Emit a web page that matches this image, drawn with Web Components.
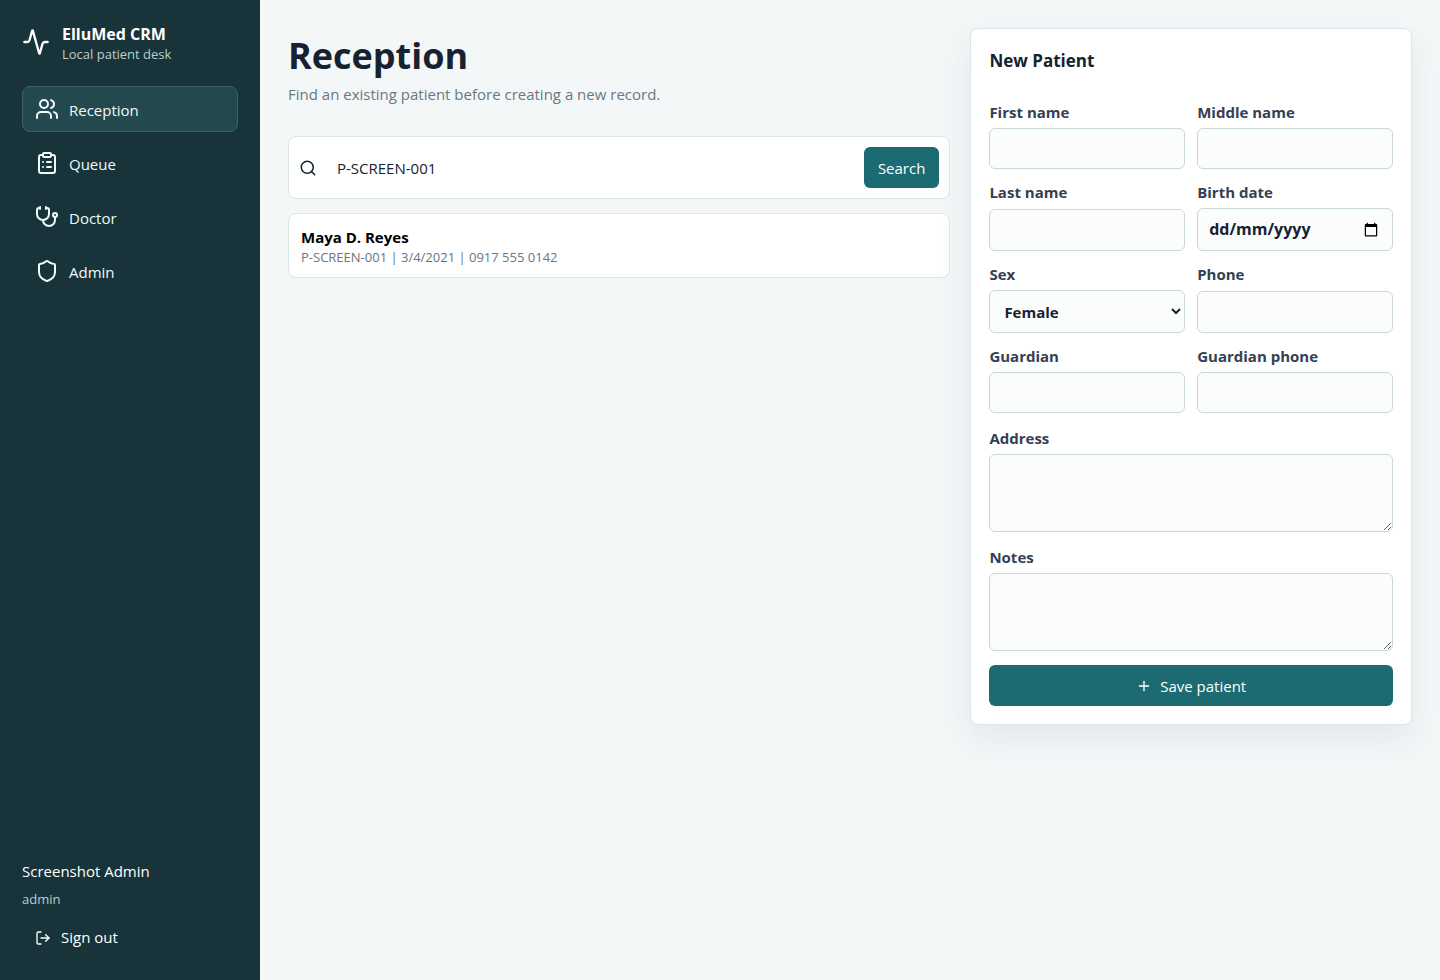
<!DOCTYPE html>
<html lang="en-GB">
<head>
<meta charset="utf-8">
<meta name="viewport" content="width=device-width, initial-scale=1">
<title>ElluMed CRM</title>
<style>
  body {
    margin: 0;
    background: #f3f7f8;
    color: #172231;
    font: 15px/21px "Segoe UI", "Open Sans", "Noto Sans", sans-serif;
  }
</style>
</head>
<body>
<crm-app></crm-app>
<script>
const define = (name, html, setup) => {
  const template = document.createElement('template');
  template.innerHTML = `<style>*{box-sizing:border-box}:host{box-sizing:border-box}</style>` + html;
  customElements.define(name, class extends HTMLElement {
    constructor() {
      super();
      this.attachShadow({ mode: 'open' }).append(template.content.cloneNode(true));
    }
    connectedCallback() {
      if (setup && !this.ready) { this.ready = true; setup(this, this.shadowRoot); }
    }
  });
};

const ICONS = {
  activity: '<path d="M22 12h-2.48a2 2 0 0 0-1.93 1.46l-2.35 8.36a.25.25 0 0 1-.48 0L9.24 2.18a.25.25 0 0 0-.48 0l-2.35 8.36A2 2 0 0 1 4.49 12H2"/>',
  users: '<path d="M16 21v-2a4 4 0 0 0-4-4H6a4 4 0 0 0-4 4v2"/><circle cx="9" cy="7" r="4"/><path d="M22 21v-2a4 4 0 0 0-3-3.87"/><path d="M16 3.13a4 4 0 0 1 0 7.75"/>',
  clipboard: '<rect width="8" height="4" x="8" y="2" rx="1" ry="1"/><path d="M16 4h2a2 2 0 0 1 2 2v14a2 2 0 0 1-2 2H6a2 2 0 0 1-2-2V6a2 2 0 0 1 2-2h2"/><path d="M12 11h4"/><path d="M12 16h4"/><path d="M8 11h.01"/><path d="M8 16h.01"/>',
  stethoscope: '<path d="M11 2v2"/><path d="M5 2v2"/><path d="M5 3H4a2 2 0 0 0-2 2v4a6 6 0 0 0 12 0V5a2 2 0 0 0-2-2h-1"/><path d="M8 15a6 6 0 0 0 12 0v-3"/><circle cx="20" cy="10" r="2"/>',
  shield: '<path d="M20 13c0 5-3.5 7.5-7.66 8.95a1 1 0 0 1-.67-.01C7.5 20.5 4 18 4 13V6a1 1 0 0 1 1-1c2 0 4.5-1.2 6.24-2.72a1.17 1.17 0 0 1 1.52 0C14.51 3.81 17 5 19 5a1 1 0 0 1 1 1z"/>',
  logout: '<path d="m16 17 5-5-5-5"/><path d="M21 12H9"/><path d="M9 21H5a2 2 0 0 1-2-2V5a2 2 0 0 1 2-2h4"/>',
  search: '<path d="m21 21-4.34-4.34"/><circle cx="11" cy="11" r="8"/>',
  plus: '<path d="M5 12h14"/><path d="M12 5v14"/>'
};

define('crm-icon', `
  <style>
    :host { display: block; flex: none; width: var(--icon-size, 18px); height: var(--icon-size, 18px); }
    svg { display: block; width: 100%; height: 100%; fill: none; stroke: currentColor;
      stroke-width: 2; stroke-linecap: round; stroke-linejoin: round; }
  </style>
  <svg viewBox="0 0 24 24" aria-hidden="true"></svg>`,
  (el, root) => { root.querySelector('svg').innerHTML = ICONS[el.getAttribute('name')]; });

define('crm-button', `
  <style>
    :host { display: block; --icon-size: 16px; }
    button { display: flex; align-items: center; justify-content: center; gap: 8px; width: 100%;
      height: 41px; padding: 1px 14px 0; border: 0; border-radius: 6px; background: #1d6b72;
      color: #fff; font: inherit; cursor: pointer; }
    :host([quiet]) button { background: transparent; gap: 10px; padding: 0 13px; }
  </style>
  <button type="button"><slot name="icon"></slot><span><slot></slot></span></button>`);

define('crm-nav-item', `
  <style>
    :host { display: block; --icon-size: 24px; }
    a { display: flex; align-items: center; gap: 10px; height: 46px; padding: 0 12px;
      border: 1px solid transparent; border-radius: 8px; color: #f2f9f9; text-decoration: none; }
    span { padding-top: 2px; }
    :host([current]) a { background: #23494f; border-color: #386369; }
  </style>
  <a href="#"><slot name="icon"></slot><span><slot></slot></span></a>`,
  (el, root) => { if (el.hasAttribute('current')) root.querySelector('a').setAttribute('aria-current', 'page'); });

define('crm-sidebar', `
  <style>
    :host { display: flex; flex-direction: column; padding: 22px; background: #18343a; color: #fff; }
    .brand { display: flex; align-items: center; gap: 12px; height: 40px; margin-bottom: 24px; --icon-size: 28px; }
    .brand div { padding-top: 4px; }
    .brand strong, .brand span { display: block; line-height: 20px; }
    .brand strong { font-size: 16px; }
    .brand span { font-size: 13px; color: #b9ced0; }
    nav { display: grid; gap: 8px; }
    .account { margin-top: auto; display: grid; justify-items: start; gap: 7px; }
    .account small { font-size: 13px; color: #b9ced0; }
  </style>
  <div class="brand">
    <crm-icon name="activity"></crm-icon>
    <div><strong>ElluMed CRM</strong><span>Local patient desk</span></div>
  </div>
  <nav aria-label="Main">
    <crm-nav-item current><crm-icon slot="icon" name="users"></crm-icon>Reception</crm-nav-item>
    <crm-nav-item><crm-icon slot="icon" name="clipboard"></crm-icon>Queue</crm-nav-item>
    <crm-nav-item><crm-icon slot="icon" name="stethoscope"></crm-icon>Doctor</crm-nav-item>
    <crm-nav-item><crm-icon slot="icon" name="shield"></crm-icon>Admin</crm-nav-item>
  </nav>
  <div class="account">
    <span>Screenshot Admin</span>
    <small>admin</small>
    <crm-button quiet><crm-icon slot="icon" name="logout"></crm-icon>Sign out</crm-button>
  </div>`);

define('crm-search', `
  <style>
    :host { display: block; }
    form { display: flex; align-items: center; gap: 10px; padding: 10px; background: #fff;
      border: 1px solid #dbe6e8; border-radius: 8px; }
    input { flex: 1; min-width: 0; height: 41px; padding: 0 10px; border: 0; outline: 0;
      background: transparent; color: inherit; font: inherit; }
  </style>
  <form role="search">
    <crm-icon name="search"></crm-icon>
    <input type="text" aria-label="Search patients" value="P-SCREEN-001">
    <crm-button>Search</crm-button>
  </form>`);

define('crm-patient', `
  <style>
    :host { display: block; }
    button { display: block; width: 100%; padding: 13px 12px 10px; background: #fff; text-align: left;
      border: 1px solid #dbe6e8; border-radius: 8px; color: #000; font: inherit; cursor: pointer; }
    strong, span { display: block; line-height: 20px; }
    span { font-size: 13px; color: #687782; }
  </style>
  <button type="button"><strong><slot name="name"></slot></strong><span><slot></slot></span></button>`);

define('crm-field', `
  <style>
    :host { display: grid; }
    label { display: grid; grid-template-rows: auto auto; row-gap: 5px; color: #344054; font-weight: 700; }
    .caption { padding-top: 1px; }
    input, select, textarea { width: 100%; min-height: 41px; margin: 0; padding: 0 11px; grid-area: 2 / 1;
      border: 1px solid #c9d8db; border-radius: 6px; background: #fbfdfd; color: #172231; font: inherit; }
    input[type=date], select { min-height: 43px; }
    input[type=date] { font-size: 16px; }
    select { padding: 0 10px; }
    textarea { display: block; height: 78px; padding: 10px 11px; resize: vertical; }
    .hint { grid-area: 2 / 1; align-self: center; padding: 0 12px; color: #172231; font-size: 16px;
      z-index: 1; pointer-events: none; }
    input.empty:not(:focus)::-webkit-datetime-edit { visibility: hidden; }
    input:focus ~ .hint, input:not(.empty) ~ .hint { visibility: hidden; }
  </style>
  <label><span class="caption"></span></label>`,
  (el, root) => {
    const kind = el.getAttribute('kind') || 'text';
    const label = root.querySelector('label');
    label.firstElementChild.textContent = el.getAttribute('label');
    const control = document.createElement(kind === 'select' || kind === 'textarea' ? kind : 'input');
    if (control.localName === 'input') control.type = kind;
    control.id = 'control';
    label.htmlFor = 'control';
    for (const text of (el.getAttribute('options') || '').split(',').filter(Boolean)) control.append(new Option(text));
    label.append(control);
    if (el.hasAttribute('hint')) {
      const hint = document.createElement('span');
      hint.className = 'hint';
      hint.textContent = el.getAttribute('hint');
      label.append(hint);
      const update = () => control.classList.toggle('empty', !control.value);
      control.addEventListener('input', update);
      update();
    }
  });

define('crm-patient-form', `
  <style>
    :host { display: block; }
    form { display: grid; gap: 14px; padding: 18px; background: #fff; border: 1px solid #dbe6e8;
      border-radius: 8px; box-shadow: 0 14px 34px rgba(24, 45, 58, .08); }
    h2 { margin: 0 0 12px; font-size: 17px; line-height: 28px; }
    .pairs { display: grid; grid-template-columns: 1fr 1fr; gap: 12px; }
  </style>
  <form>
    <h2>New Patient</h2>
    <div class="pairs">
      <crm-field label="First name"></crm-field>
      <crm-field label="Middle name"></crm-field>
      <crm-field label="Last name"></crm-field>
      <crm-field label="Birth date" kind="date" hint="dd/mm/yyyy"></crm-field>
      <crm-field label="Sex" kind="select" options="Female,Male"></crm-field>
      <crm-field label="Phone"></crm-field>
      <crm-field label="Guardian"></crm-field>
      <crm-field label="Guardian phone"></crm-field>
    </div>
    <crm-field label="Address" kind="textarea"></crm-field>
    <crm-field label="Notes" kind="textarea"></crm-field>
    <crm-button><crm-icon slot="icon" name="plus"></crm-icon>Save patient</crm-button>
  </form>`);

define('crm-app', `
  <style>
    :host { display: grid; grid-template-columns: 260px minmax(0, 1fr); min-height: 100vh; }
    main { display: grid; grid-template-columns: minmax(0, 3fr) minmax(0, 2fr); gap: 20px;
      align-items: start; padding: 28px; }
    h1 { margin: 0; font-size: 36px; line-height: 56px; }
    header p { margin: 0 0 31px; color: #687782; }
    .results { display: grid; gap: 14px; }
  </style>
  <crm-sidebar></crm-sidebar>
  <main>
    <section>
      <header>
        <h1>Reception</h1>
        <p>Find an existing patient before creating a new record.</p>
      </header>
      <div class="results">
        <crm-search></crm-search>
        <crm-patient><span slot="name">Maya D. Reyes</span>P-SCREEN-001 | 3/4/2021 | 0917 555 0142</crm-patient>
      </div>
    </section>
    <crm-patient-form></crm-patient-form>
  </main>`);
</script>
</body>
</html>
